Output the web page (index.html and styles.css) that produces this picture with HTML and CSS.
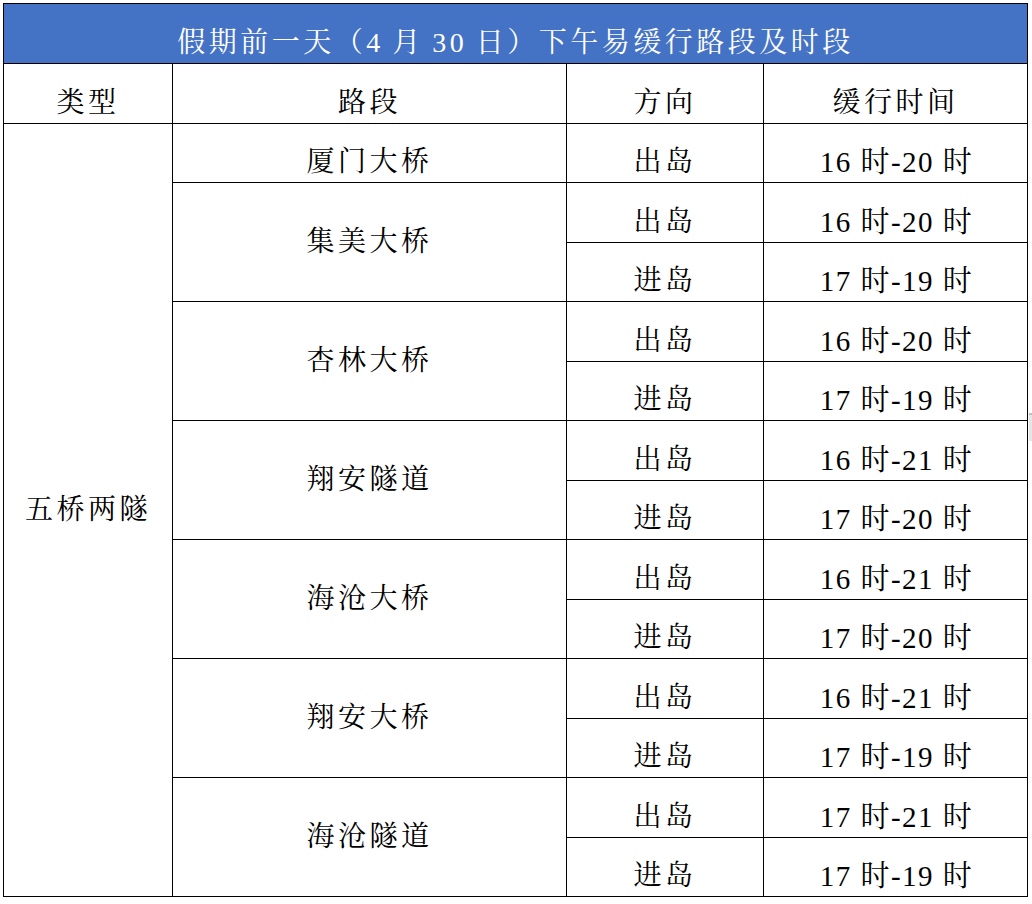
FILE: index.html
```html
<!DOCTYPE html>
<html lang="zh-CN">
<head>
<meta charset="utf-8">
<title>假期前一天（4 月 30 日）下午易缓行路段及时段</title>
<link rel="stylesheet" href="styles.css">
</head>
<body>
<div class="sheet">
<table class="grid">
  <colgroup>
    <col class="c-type">
    <col class="c-road">
    <col class="c-dir">
    <col class="c-time">
  </colgroup>
  <tr class="row title-row">
    <td colspan="4" class="title low">假期前一天（4 月 30 日）下午易缓行路段及时段</td>
  </tr>
  <tr class="row">
    <td class="low">类型</td>
    <td class="low">路段</td>
    <td class="low">方向</td>
    <td class="low">缓行时间</td>
  </tr>
  <tr class="row">
    <td rowspan="13" class="mid">五桥两隧</td>
    <td class="low">厦门大桥</td>
    <td class="low">出岛</td>
    <td class="low time">16 时-20 时</td>
  </tr>
  <tr class="row">
    <td rowspan="2" class="mid">集美大桥</td>
    <td class="low">出岛</td>
    <td class="low time">16 时-20 时</td>
  </tr>
  <tr class="row">
    <td class="low">进岛</td>
    <td class="low time">17 时-19 时</td>
  </tr>
  <tr class="row">
    <td rowspan="2" class="mid">杏林大桥</td>
    <td class="low">出岛</td>
    <td class="low time">16 时-20 时</td>
  </tr>
  <tr class="row">
    <td class="low">进岛</td>
    <td class="low time">17 时-19 时</td>
  </tr>
  <tr class="row">
    <td rowspan="2" class="mid">翔安隧道</td>
    <td class="low">出岛</td>
    <td class="low time">16 时-21 时</td>
  </tr>
  <tr class="row">
    <td class="low">进岛</td>
    <td class="low time">17 时-20 时</td>
  </tr>
  <tr class="row">
    <td rowspan="2" class="mid">海沧大桥</td>
    <td class="low">出岛</td>
    <td class="low time">16 时-21 时</td>
  </tr>
  <tr class="row">
    <td class="low">进岛</td>
    <td class="low time">17 时-20 时</td>
  </tr>
  <tr class="row">
    <td rowspan="2" class="mid">翔安大桥</td>
    <td class="low">出岛</td>
    <td class="low time">16 时-21 时</td>
  </tr>
  <tr class="row">
    <td class="low">进岛</td>
    <td class="low time">17 时-19 时</td>
  </tr>
  <tr class="row">
    <td rowspan="2" class="mid">海沧隧道</td>
    <td class="low">出岛</td>
    <td class="low time">17 时-21 时</td>
  </tr>
  <tr class="row">
    <td class="low">进岛</td>
    <td class="low time">17 时-19 时</td>
  </tr>
</table>
<div class="scroll-mark"></div>
</div>
</body>
</html>
```
FILE: styles.css
```css
html, body {
  margin: 0;
  padding: 0;
  background: #ffffff;
}

.sheet {
  position: relative;
  padding: 3px 0 0 3px;
  width: 1029px;
  height: 901px;
}

.grid {
  border-collapse: collapse;
  table-layout: fixed;
  width: 1024px;
  font-family: "Liberation Serif", "Noto Serif CJK SC", "Noto Sans CJK SC", serif;
  font-size: 28px;
  line-height: 28px;
  letter-spacing: 3.5px;
  color: #000000;
}

.c-type { width: 169px; }
.c-road { width: 394px; }
.c-dir  { width: 197px; }
.c-time { width: 264px; }

.row {
  height: 59.5px;
}

.title-row {
  height: 60px;
}

.grid td {
  border: 1px solid #000000;
  padding: 0;
  text-align: center;
  white-space: nowrap;
}

.grid .low {
  vertical-align: bottom;
  padding-bottom: 6px;
}

.grid .mid {
  vertical-align: middle;
}

.grid .time {
  font-size: 29px;
  letter-spacing: 1.5px;
  padding-left: 2px;
}

.grid .title {
  background: #4472c4;
  color: #ffffff;
  word-spacing: -2px;
}

.scroll-mark {
  position: absolute;
  left: 1029px;
  top: 413px;
  width: 3px;
  height: 26px;
  background: #e6e6e6;
  border-top: 2px solid #bfbfbf;
}
```
